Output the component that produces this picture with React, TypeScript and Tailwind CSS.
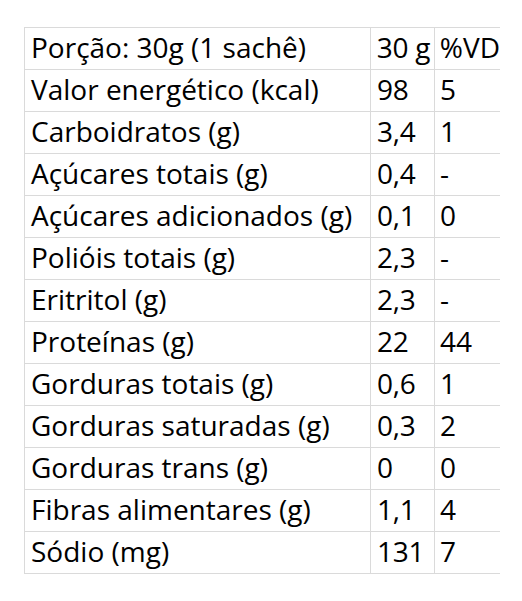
const rows: [string, string, string][] = [
  ['Porção: 30g (1 sachê)', '30 g', '%VD'],
  ['Valor energético (kcal)', '98', '5'],
  ['Carboidratos (g)', '3,4', '1'],
  ['Açúcares totais (g)', '0,4', '-'],
  ['Açúcares adicionados (g)', '0,1', '0'],
  ['Polióis totais (g)', '2,3', '-'],
  ['Eritritol (g)', '2,3', '-'],
  ['Proteínas (g)', '22', '44'],
  ['Gorduras totais (g)', '0,6', '1'],
  ['Gorduras saturadas (g)', '0,3', '2'],
  ['Gorduras trans (g)', '0', '0'],
  ['Fibras alimentares (g)', '1,1', '4'],
  ['Sódio (mg)', '131', '7'],
];

export default function App() {
  return (
    <div className="min-h-screen bg-white pt-[27px] pl-[24px] font-['Open_Sans',sans-serif] text-black">
      <div className="w-[476px] border-t border-[#dadada]">
        {rows.map(([label, amount, vd]) => (
          <div key={label} className="flex h-[42px] border-b border-[#dadada] text-[28px] leading-[39px]">
            <div className="w-[346px] border-l border-[#dadada] pl-[6px] whitespace-nowrap">{label}</div>
            <div className="w-[64px] border-l border-[#dadada] pl-[6px] whitespace-nowrap tracking-[-0.3px]">{amount}</div>
            <div className="flex-1 border-l border-[#dadada] pl-[5px] whitespace-nowrap">{vd}</div>
          </div>
        ))}
      </div>
    </div>
  );
}
